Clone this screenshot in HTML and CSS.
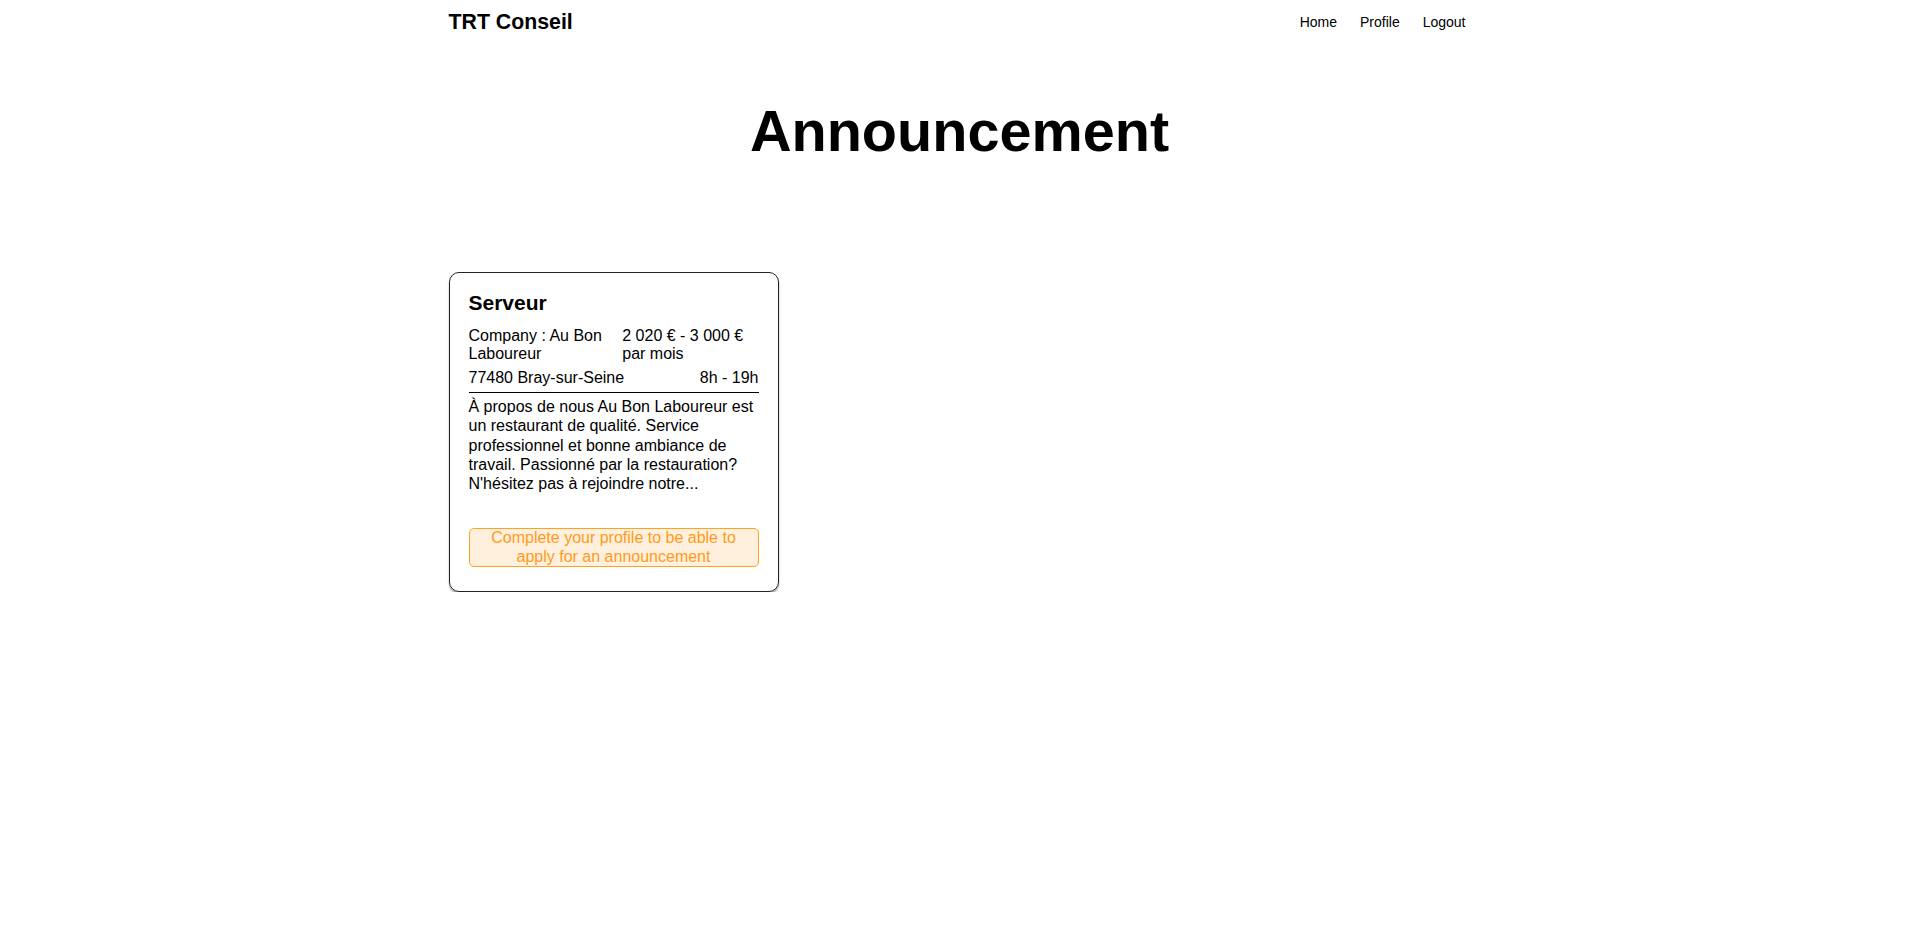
FILE: index.html
```html
<!DOCTYPE html>
<html lang="fr">
<head>
<meta charset="utf-8">
<title>TRT Conseil - Announcement</title>
<link rel="stylesheet" href="styles.css">
</head>
<body>
<header class="topbar">
  <a class="brand" href="#">TRT Conseil</a>
  <nav class="nav">
    <a class="nav-link" href="#">Home</a>
    <a class="nav-link" href="#">Profile</a>
    <a class="nav-link" href="#">Logout</a>
  </nav>
</header>
<main class="page">
  <h1 class="page-title">Announcement</h1>
  <section class="cards">
    <article class="card">
      <h2 class="card-title">Serveur</h2>
      <div class="card-row">
        <span class="cell">Company : Au Bon Laboureur</span>
        <span class="cell">2 020 € - 3 000 € par mois</span>
      </div>
      <div class="card-row card-row--divider">
        <span class="cell">77480 Bray-sur-Seine</span>
        <span class="cell">8h - 19h</span>
      </div>
      <p class="card-text">À propos de nous Au Bon Laboureur est un restaurant de qualité. Service professionnel et bonne ambiance de travail. Passionné par la restauration? N'hésitez pas à rejoindre notre...</p>
      <div class="notice">Complete your profile to be able to apply for an announcement</div>
    </article>
  </section>
</main>
</body>
</html>
```
FILE: styles.css
```css
html, body {
  margin: 0;
  padding: 0;
  background: #fff;
  color: #000;
  font-family: "Liberation Sans", Arial, sans-serif;
}

.topbar {
  width: 1022px;
  height: 24px;
  margin: 0 auto;
  padding: 10px 0;
  display: flex;
  justify-content: space-between;
  align-items: center;
}

.brand {
  font-size: 21.3px;
  line-height: 24px;
  font-weight: bold;
  color: #000;
  text-decoration: none;
}

.nav {
  display: flex;
  gap: 23px;
  padding-right: 5px;
}

.nav-link {
  font-size: 14px;
  line-height: 16px;
  color: #000;
  text-decoration: none;
}

.page {
  width: 1022px;
  margin: 0 auto;
}

.page-title {
  margin: 54px 0 0;
  text-align: center;
  font-size: 57.6px;
  font-weight: bold;
  line-height: 66px;
}

.cards {
  margin-top: 108px;
  display: flex;
}

.card {
  width: 290px;
  padding: 18px 19px 24px;
  border: 1px solid #222;
  border-radius: 10px;
  box-shadow: 0 2px 2px rgba(0, 0, 0, 0.35);
  font-size: 16px;
}

.card-title {
  margin: 0 0 12px;
  font-size: 21px;
  font-weight: bold;
  line-height: 24px;
}

.card-row {
  display: flex;
  justify-content: space-between;
  line-height: 18.4px;
}

.card-row + .card-row {
  margin-top: 5px;
}

.card-row--divider {
  padding-bottom: 5px;
  border-bottom: 1px solid #000;
}

.card-text {
  margin: 4px 0 35px;
  line-height: 19.2px;
}

.notice {
  padding: 0 6px;
  border: 1px solid #ffa21f;
  border-radius: 5px;
  background: #fff0dd;
  color: #ff9a1a;
  text-align: center;
  line-height: 18.5px;
}
```
